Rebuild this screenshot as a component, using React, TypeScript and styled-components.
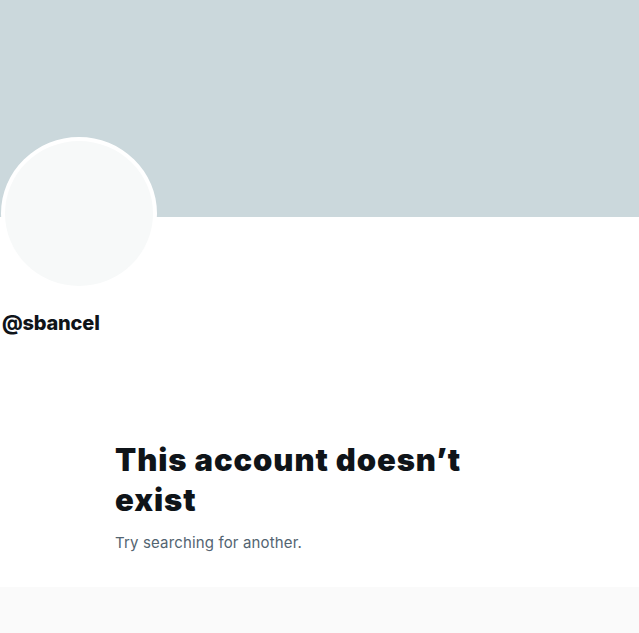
import React from "react";
import styled, { createGlobalStyle } from "styled-components";

const Global = createGlobalStyle`
  html, body { margin: 0; padding: 0; background: #ffffff; }
  body { font-family: Inter, "Liberation Sans", Arial, sans-serif; }
`;

const Page = styled.div`
  width: 639px;
  height: 633px;
  display: flex;
  flex-direction: column;
  background: #ffffff;
  overflow: hidden;
`;

const Banner = styled.div`
  height: 217px;
  background: #cbd8dc;
  flex-shrink: 0;
`;

const ProfileHead = styled.div`
  display: flex;
  flex-direction: column;
  align-items: flex-start;
  padding-left: 1px;
`;

const Avatar = styled.div`
  width: 148px;
  height: 145px;
  margin-top: -80px;
  border-radius: 50%;
  border: 4px solid #ffffff;
  background: #f7f9f9;
`;

const Handle = styled.div`
  margin-top: 21px;
  margin-left: 1px;
  font-size: 20px;
  font-weight: 800;
  color: #0f1419;
  line-height: 24px;
  letter-spacing: -0.2px;
`;

const Empty = styled.div`
  margin-top: 105px;
  padding-left: 115px;
  display: flex;
  flex-direction: column;
`;

const Title = styled.h1`
  margin: 0;
  font-size: 31px;
  font-weight: 900;
  line-height: 40px;
  color: #0f1419;
  letter-spacing: 0.9px;
  width: 380px;
`;

const Sub = styled.p`
  margin: 13px 0 0;
  font-size: 15px;
  line-height: 20px;
  color: #536471;
  letter-spacing: 0.15px;
`;

const Footer = styled.div`
  margin-top: auto;
  height: 46px;
  background: #fafafa;
`;

export default function App() {
  return (
    <>
      <Global />
      <Page>
        <Banner />
        <ProfileHead>
          <Avatar />
          <Handle>@sbancel</Handle>
        </ProfileHead>
        <Empty>
          <Title>This account doesn’t exist</Title>
          <Sub>Try searching for another.</Sub>
        </Empty>
        <Footer />
      </Page>
    </>
  );
}
